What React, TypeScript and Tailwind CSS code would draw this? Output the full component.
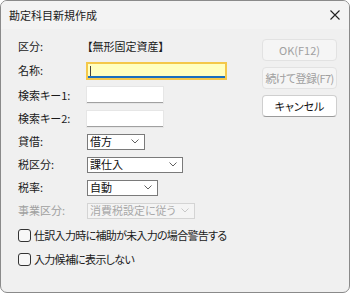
import React from 'react';

const font = "font-['Noto_Sans_CJK_JP','Noto_Sans',sans-serif] [font-feature-settings:'palt']";

function Chevron({ disabled }: { disabled?: boolean }) {
  return (
    <svg width="8" height="5" viewBox="0 0 8 5" className="shrink-0">
      <path d="M0.5 0.5 L4 4 L7.5 0.5" fill="none" stroke={disabled ? '#c8c8c8' : '#606060'} strokeWidth="1" />
    </svg>
  );
}

function Select({ value, width, disabled }: { value: string; width: string; disabled?: boolean }) {
  return (
    <div
      className={`${width} h-[16px] flex items-center justify-between pl-[2px] pr-[5px] border ${
        disabled ? 'border-[#d4d4d4] bg-[#f4f4f4] text-[#a8a8a8]' : 'border-[#7a7a7a] bg-white text-[#111]'
      }`}
    >
      <span className="leading-none whitespace-nowrap">{value}</span>
      <Chevron disabled={disabled} />
    </div>
  );
}

function Row({ label, children, h = 'h-[23px]', disabled }: { label: string; children?: React.ReactNode; h?: string; disabled?: boolean }) {
  return (
    <div className={`flex items-center ${h}`}>
      <div className={`w-[69px] ${disabled ? 'text-[#a0a0a0]' : 'text-[#1a1a1a]'}`}>{label}</div>
      {children}
    </div>
  );
}

function Check({ label }: { label: string }) {
  return (
    <div className="flex items-center h-[23px] gap-[3px]">
      <div className="w-[13px] h-[13px] rounded-[3px] border border-[#333] bg-[#f7f7f7]" />
      <span className="text-[#1a1a1a] tracking-[-0.7px] whitespace-nowrap">{label}</span>
    </div>
  );
}

export default function App() {
  return (
    <div className={`w-[350px] h-[293px] bg-[#f0f0f0] border border-[#8a8a8a] rounded-[7px] overflow-hidden text-[11px] ${font}`}>
      <div className="h-[28px] flex items-center justify-between pl-[8px] pr-[8px] bg-[#f3f3f3]">
        <span className="text-[#1a1a1a] text-[11px]">勘定科目新規作成</span>
        <svg width="10" height="10" viewBox="0 0 10 10" className="mr-[1px]">
          <path d="M0.5 0.5 L9.5 9.5 M9.5 0.5 L0.5 9.5" stroke="#222" strokeWidth="1.1" />
        </svg>
      </div>
      <div className="flex pt-[6px] pl-[17px]">
        <div className="w-[244px]">
          <Row label="区分:">
            <span className="text-[#1a1a1a]">【無形固定資産】</span>
          </Row>
          <Row label="名称:" h="h-[25px]">
            <div className="w-[141px] h-[18px] -ml-[1px] border-2 border-[#f4c84a] bg-[#ffffc0] relative flex items-center">
              <div className="ml-[2px] w-[1px] h-[10px] bg-[#444]" />
              <div className="absolute left-0 right-0 bottom-0 h-[2px] bg-[#1a6fbf]" />
            </div>
          </Row>
          <Row label="検索キー1:" h="h-[24px]">
            <div className="w-[76px] h-[16px] bg-white border-b border-[#a0a0a0] shadow-[0_0_0_1px_#e6e6e6]" />
          </Row>
          <Row label="検索キー2:">
            <div className="w-[76px] h-[16px] bg-white border-b border-[#a0a0a0] shadow-[0_0_0_1px_#e6e6e6]" />
          </Row>
          <Row label="貸借:">
            <Select value="借方" width="w-[58px]" />
          </Row>
          <Row label="税区分:">
            <Select value="課仕入" width="w-[96px]" />
          </Row>
          <Row label="税率:">
            <Select value="自動" width="w-[71px]" />
          </Row>
          <Row label="事業区分:" disabled>
            <Select value="消費税設定に従う" width="w-[108px]" disabled />
          </Row>
          <div className="mt-[2px]">
            <Check label="仕訳入力時に補助が未入力の場合警告する" />
          </div>
          <div className="mt-[1px]">
            <Check label="入力候補に表示しない" />
          </div>
        </div>
        <div className="flex flex-col gap-[6px] pt-[4px]">
          <div className="w-[75px] h-[22px] rounded-[4px] bg-[#f5f5f5] border border-[#e2e2e2] text-[#a0a0a0] flex items-center justify-center whitespace-nowrap">OK(F12)</div>
          <div className="w-[75px] h-[22px] rounded-[4px] bg-[#f5f5f5] border border-[#e2e2e2] text-[#a0a0a0] flex items-center justify-center whitespace-nowrap tracking-[-0.6px]">続けて登録(F7)</div>
          <div className="w-[75px] h-[22px] rounded-[4px] bg-white border border-[#cfcfcf] border-b-[#9a9a9a] text-[#111] flex items-center justify-center whitespace-nowrap">キャンセル</div>
        </div>
      </div>
    </div>
  );
}
